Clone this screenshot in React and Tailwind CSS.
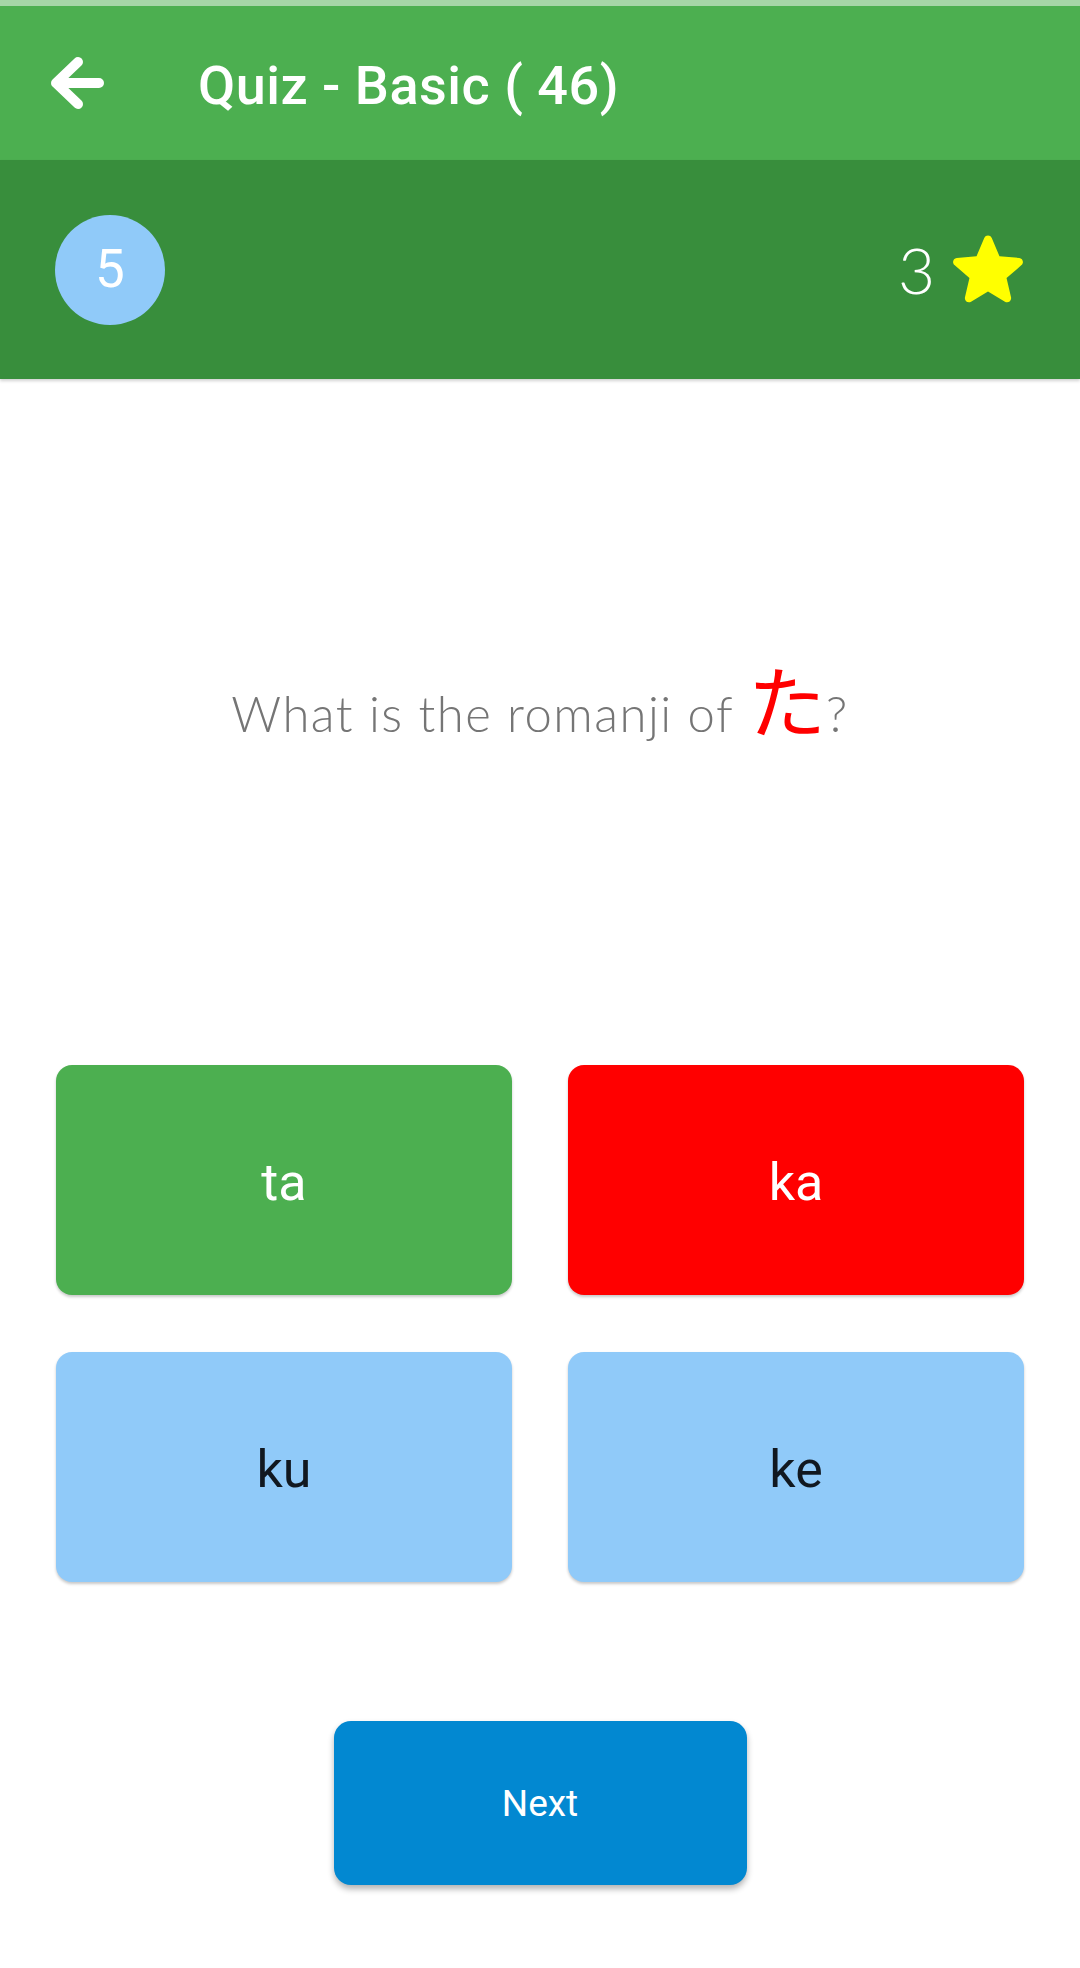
import React from "react";

function BackArrow() {
  return (
    <svg width="60" height="60" viewBox="0 0 60 60" className="ml-[48px] shrink-0">
      <path
        d="M51 30H9M30 9L8 30L30 51"
        fill="none"
        stroke="#ffffff"
        strokeWidth="10"
        strokeLinecap="round"
        strokeLinejoin="round"
      />
    </svg>
  );
}

function Star() {
  return (
    <svg width="98" height="98" viewBox="0 0 24 24" className="shrink-0">
      <path
        fill="#ffff00"
        d="M12 17.27l4.15 2.51c.76.46 1.69-.22 1.490-1.08l-1.1-4.72 3.67-3.18c.67-.58.31-1.68-.57-1.75l-4.83-.41-1.89-4.46c-.34-.81-1.5-.81-1.84 0L9.19 8.63l-4.83.41c-.88.07-1.24 1.17-.57 1.75l3.67 3.18-1.1 4.72c-.2.86.73 1.54 1.49 1.08L12 17.27z"
      />
    </svg>
  );
}

function Answer({ label, bg, fg }) {
  return (
    <div
      className={`h-[230px] rounded-[16px] flex items-center justify-center shadow-[0_2px_3px_rgba(0,0,0,0.22)] ${bg}`}
    >
      <span
        className={`pt-[5px] text-[52px] leading-none ${fg}`}
        style={{ fontFamily: "Roboto, 'Liberation Sans', sans-serif" }}
      >
        {label}
      </span>
    </div>
  );
}

export default function App() {
  return (
    <div className="w-[1080px] h-[1968px] bg-white overflow-hidden flex flex-col">
      <div className="h-[6px] bg-[#a5d6a7]" />
      <div className="h-[154px] bg-[#4caf50] flex items-center">
        <BackArrow />
        <span
          className="ml-[90px] mt-[5px] text-white text-[54px] font-medium leading-none tracking-[0.5px]"
          style={{ fontFamily: "Roboto, 'Liberation Sans', sans-serif" }}
        >
          Quiz - Basic ( 46)
        </span>
      </div>
      <div className="relative z-10 h-[219px] bg-[#388e3c] flex items-center justify-between pl-[55px] pr-[43px] shadow-[0_2px_3px_rgba(0,0,0,0.18)]">
        <div
          className="w-[110px] h-[110px] rounded-full bg-[#90caf9] flex items-center justify-center text-white text-[53px] leading-none"
          style={{ fontFamily: "Roboto, 'Liberation Sans', sans-serif" }}
        >
          5
        </div>
        <div className="flex items-center gap-[4px]">
          <span
            className="text-white text-[64px] font-light leading-none"
            style={{ fontFamily: "Lato, 'Open Sans', sans-serif" }}
          >
            3
          </span>
          <Star />
        </div>
      </div>
      <div className="h-[686px] pt-[280px] flex justify-center">
        <div
          className="text-[49px] leading-none font-light text-[#757575] tracking-[1.5px] whitespace-nowrap"
          style={{ fontFamily: "Lato, 'Open Sans', sans-serif" }}
        >
          What is the romanji of{" "}
          <span
            className="text-[78px] text-[#ff0000] font-normal tracking-normal"
            style={{ fontFamily: "'Noto Sans CJK JP', sans-serif" }}
          >
            た
          </span>
          ?
        </div>
      </div>
      <div className="grid grid-cols-2 gap-x-[56px] gap-y-[57px] px-[56px]">
        <Answer label="ta" bg="bg-[#4caf50]" fg="text-white" />
        <Answer label="ka" bg="bg-[#ff0000]" fg="text-white" />
        <Answer label="ku" bg="bg-[#90caf9]" fg="text-[#111820]" />
        <Answer label="ke" bg="bg-[#90caf9]" fg="text-[#111820]" />
      </div>
      <div className="mt-[139px] flex justify-center">
        <div
          className="w-[413px] h-[164px] rounded-[17px] bg-[#0288d1] flex items-center justify-center text-white text-[37px] leading-none shadow-[0_4px_6px_rgba(0,0,0,0.3)]"
          style={{ fontFamily: "Roboto, 'Liberation Sans', sans-serif" }}
        >
          Next
        </div>
      </div>
    </div>
  );
}
